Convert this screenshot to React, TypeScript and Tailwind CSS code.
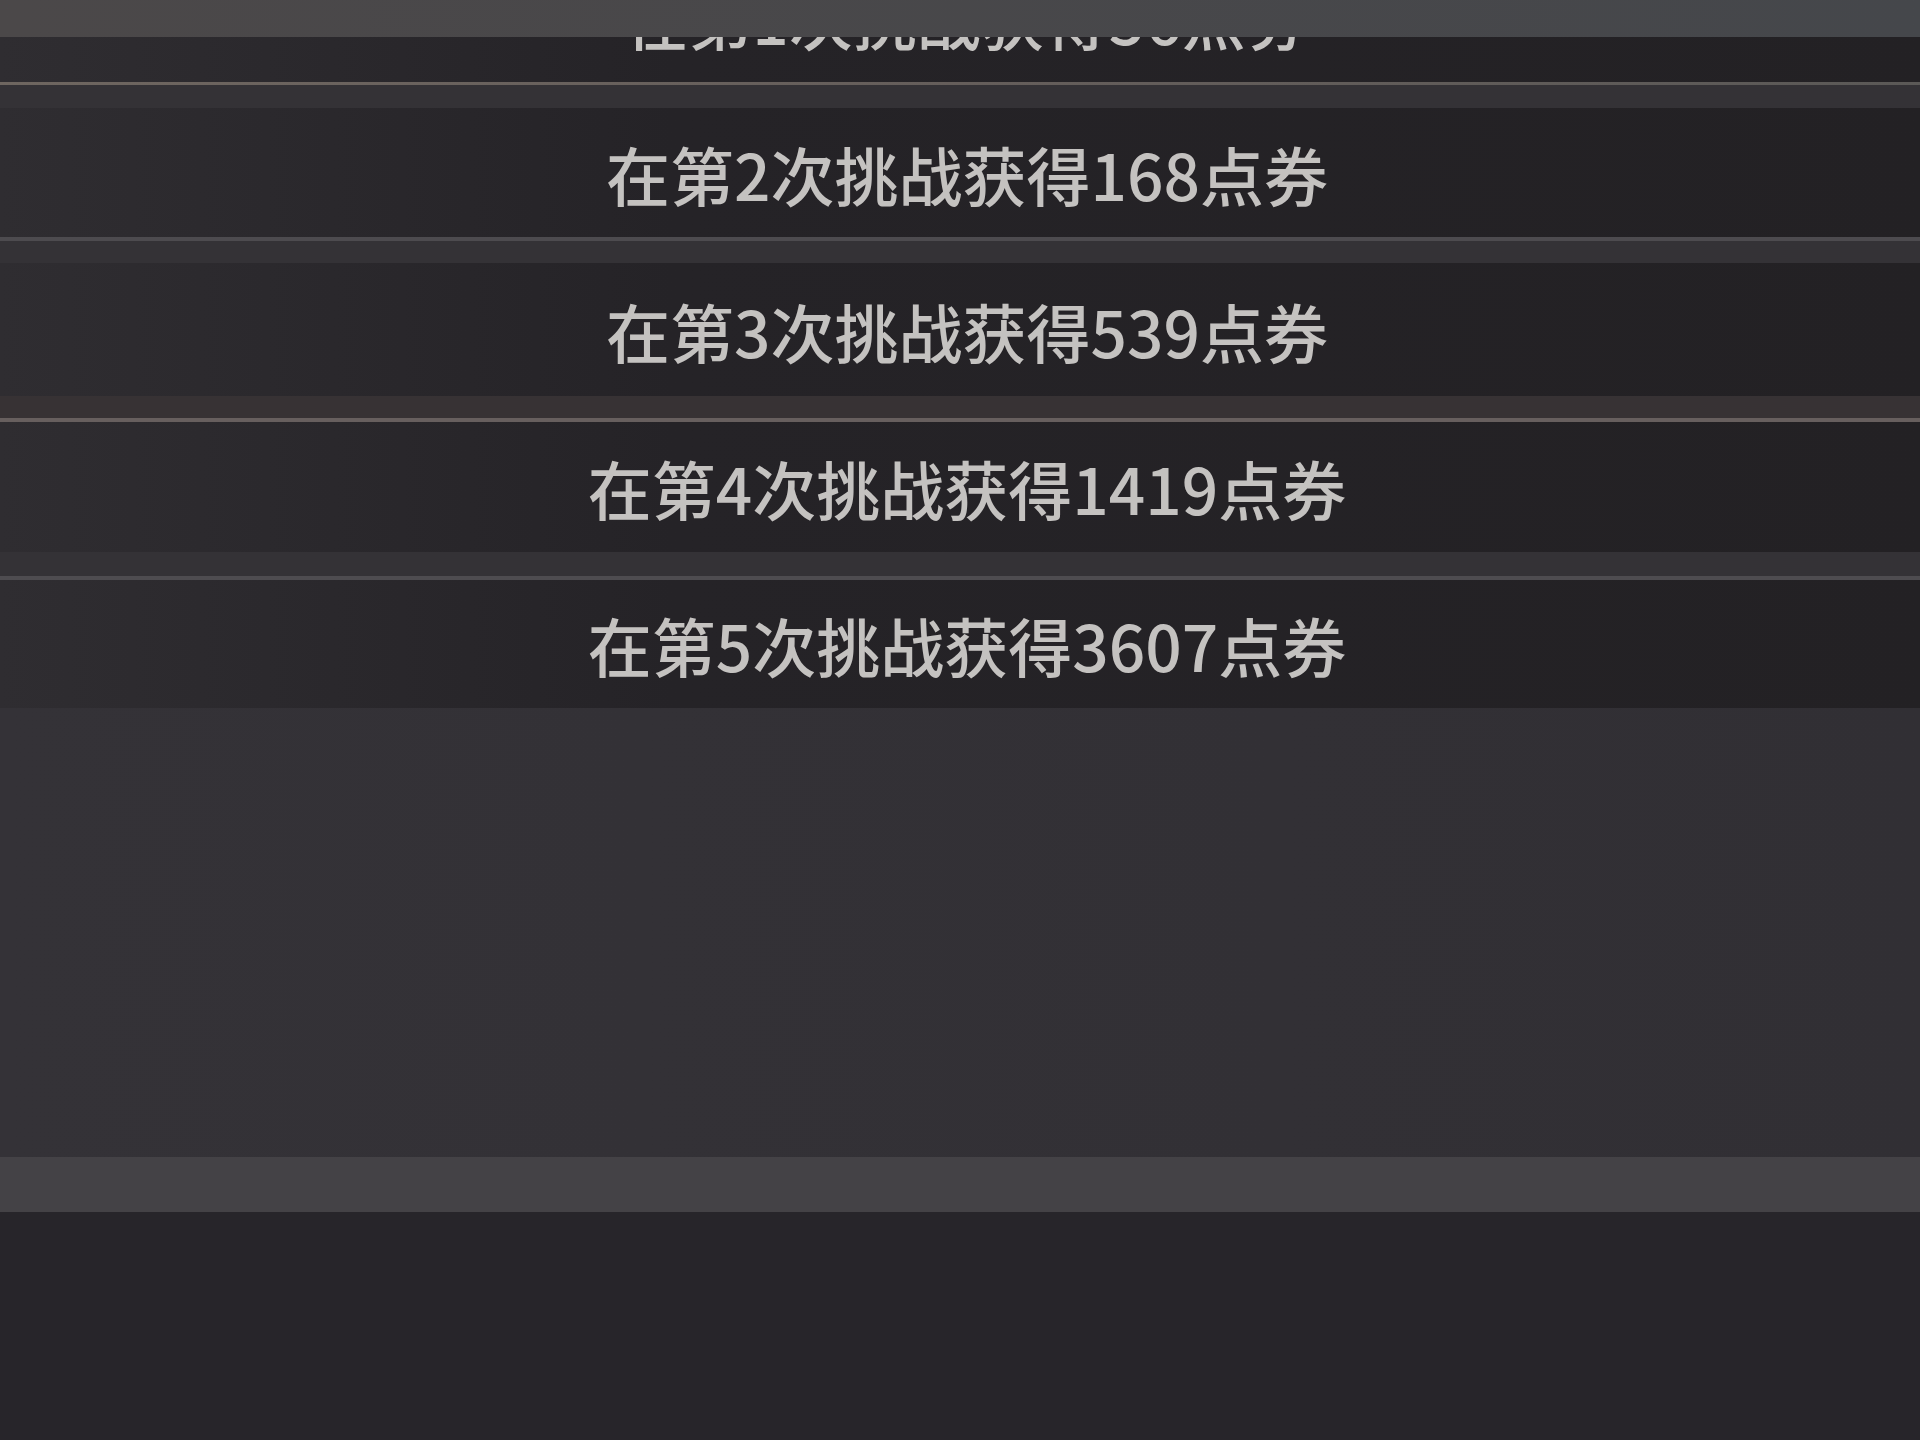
import React from 'react';

type Reward = { round: number; points: number };

const rewards: Reward[] = [
    { round: 2, points: 168 },
    { round: 3, points: 539 },
    { round: 4, points: 1419 },
    { round: 5, points: 3607 },
];

const lineColors = ['bg-[#4d4b4f]', 'bg-[#675f5e]', 'bg-[#4e4c50]'];

const RowText: React.FC<{ round: number; points: number }> = ({ round, points }) => (
    <span className="pl-[14px] text-[64px] font-medium leading-none text-[#c4c2c0] whitespace-nowrap">
        在第{round}次挑战获得{points}点券
    </span>
);

const RewardRow: React.FC<{ reward: Reward; height: string }> = ({ reward, height }) => (
    <div
        className={`${height} shrink-0 flex items-center justify-center bg-linear-to-r from-[#2f2d31] via-[#252327] via-35% to-[#232124]`}
    >
        <RowText round={reward.round} points={reward.points} />
    </div>
);

export default function App() {
    return (
        <div
            className="w-[1920px] h-[1440px] flex flex-col overflow-hidden bg-[#333136]"
            style={{ fontFamily: '"Noto Sans CJK SC", "Noto Sans", sans-serif' }}
        >
            {/* header strip the list scrolls under */}
            <div className="h-[37px] shrink-0 bg-linear-to-r from-[#4b4849] to-[#45474b]" />

            {/* first row, mostly scrolled away */}
            <div className="h-[45px] shrink-0 overflow-hidden flex flex-col justify-end">
                <RewardRow reward={{ round: 1, points: 56 }} height="h-[130px]" />
            </div>
            <div className="h-[3px] shrink-0 bg-linear-to-r from-[#6e6660] via-[#655e5b] to-[#5b5957]" />
            <div className="h-[23px] shrink-0 bg-[#343236]" />

            <RewardRow reward={rewards[0]} height="h-[129px]" />
            <div className={`h-[4px] shrink-0 ${lineColors[0]}`} />
            <div className="h-[22px] shrink-0 bg-[#343236]" />

            <RewardRow reward={rewards[1]} height="h-[133px]" />
            <div className="h-[22px] shrink-0 bg-[#373234]" />
            <div className={`h-[4px] shrink-0 ${lineColors[1]}`} />

            <RewardRow reward={rewards[2]} height="h-[130px]" />
            <div className="h-[24px] shrink-0 bg-[#343236]" />
            <div className={`h-[4px] shrink-0 ${lineColors[2]}`} />

            <RewardRow reward={rewards[3]} height="h-[128px]" />

            <div className="flex-1 bg-linear-to-r from-[#343237] to-[#312f34]" />
            <div className="h-[55px] shrink-0 bg-[#444246]" />
            <div className="h-[228px] shrink-0 bg-[#27252a]" />
        </div>
    );
}
